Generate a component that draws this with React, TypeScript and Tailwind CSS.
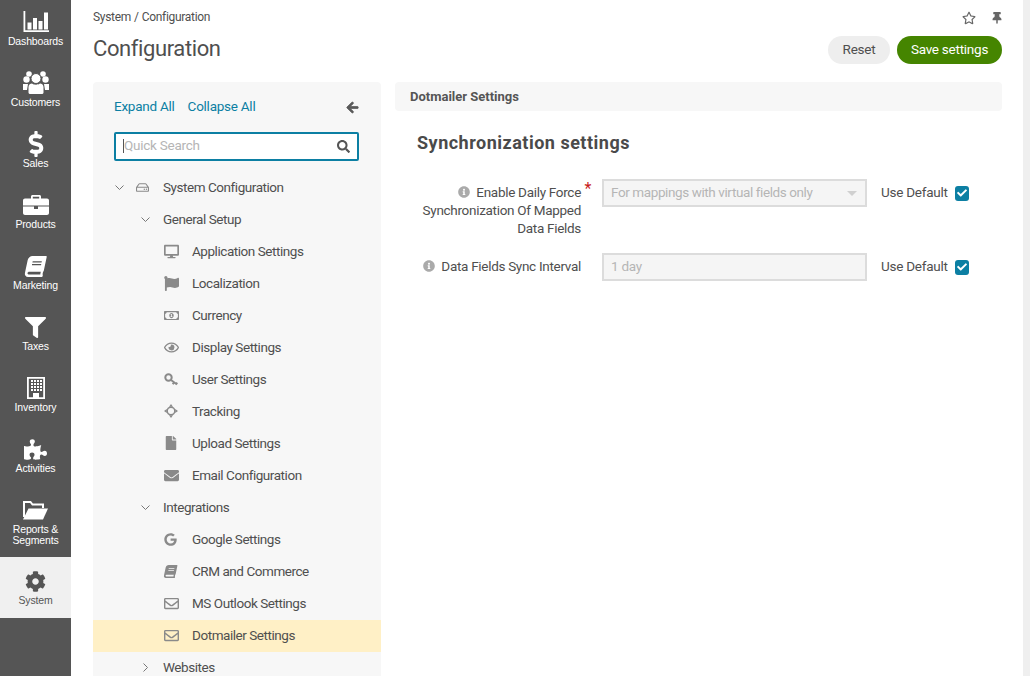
import type { ReactNode } from 'react';
import {
  FaArrowLeft, FaBook, FaCheck, FaCog, FaDesktop, FaDollarSign, FaEnvelope, FaFile, FaFilter, FaFlag, FaGoogle,
  FaInfoCircle, FaPuzzlePiece, FaRegEnvelope, FaRegEye, FaRegHdd, FaRegMoneyBillAlt, FaRegStar, FaSearch, FaThumbtack,
} from 'react-icons/fa';

function BarChartIcon() {
  return (
    <svg width="26" height="22" viewBox="0 0 26 22" fill="currentColor">
      <path d="M0.5 0h1.8v19.2H26V21H0.5z" />
      <rect x="4.5" y="11.5" width="4" height="7" />
      <rect x="10" y="7" width="4" height="11.5" />
      <rect x="15.5" y="10" width="4" height="8.5" />
      <rect x="21" y="1.5" width="4" height="17" />
    </svg>
  );
}

function UsersIcon() {
  return (
    <svg width="26" height="24" viewBox="0 0 26 24" fill="currentColor">
      <circle cx="6" cy="3" r="2.8" />
      <circle cx="20" cy="3" r="2.8" />
      <circle cx="3.5" cy="8.5" r="3.2" />
      <circle cx="22.5" cy="8.5" r="3.2" />
      <path d="M0 13h5l-1 6H0zM26 13h-5l1 6h4z" />
      <circle cx="13" cy="7.5" r="5" stroke="#555555" strokeWidth="1" />
      <path d="M5.5 16c0-2.5 2-3.500 3.500-3.500 1 .8 2.500 1.200 4 1.200s3-.4 4-1.200c1.500 0 3.500 1 3.500 3.500v5.500c0 1-1 1.500-2 1.500H7.500c-1 0-2-.5-2-1.500z" />
    </svg>
  );
}

function BriefcaseIcon() {
  return (
    <svg width="26" height="20" viewBox="0 0 26 20" fill="currentColor">
      <path d="M8 4V1.500C8 .7 8.700 0 9.500 0h7C17.300 0 18 .7 18 1.500V4h-1.800V1.800H9.800V4z" />
      <path d="M2 3.500h22c1.100 0 2 .9 2 2v5H0v-5c0-1.100.9-2 2-2zM0 11.500h11V14h4v-2.500h11V18c0 1.100-.9 2-2 2H2c-1.100 0-2-.9-2-2z" />
    </svg>
  );
}

function BuildingIcon() {
  const cols = [4, 7, 10, 13];
  const rows = [3, 6, 9, 12];
  return (
    <svg width="18" height="22" viewBox="0 0 18 22" fill="currentColor">
      <path fillRule="evenodd" d="M0 0h18v22H0zM1.800 1.800v18.400h4.200V16h6v4.200h4.200V1.800z" />
      {rows.map((y) => cols.map((x) => <rect key={`${x}-${y}`} x={x} y={y} width="2" height="2" />))}
    </svg>
  );
}

function FolderIcon() {
  return (
    <svg width="25" height="20" viewBox="0 0 25 20" fill="currentColor">
      <path d="M1 17V2h6.500l2 2.500H20V8" fill="none" stroke="currentColor" strokeWidth="2" />
      <path d="M5.500 8.500H25L20 19.500H0z" />
    </svg>
  );
}

function KeyIcon() {
  return (
    <svg width="14" height="13" viewBox="0 0 14 13" fill="none" stroke="currentColor" strokeWidth="2">
      <circle cx="4.500" cy="4.500" r="3.200" />
      <path d="M7 7l6 4.500M10 9.200l-1.200 2M12.300 10.900l1-1.300" />
    </svg>
  );
}

function TrackIcon() {
  return (
    <svg width="14" height="14" viewBox="0 0 14 14" fill="currentColor">
      <circle cx="7" cy="7" r="3.800" fill="none" stroke="currentColor" strokeWidth="1.500" />
      <path d="M7 0l2 2.800H5zM7 14l2-2.800H5zM0 7l2.800-2v4zM14 7l-2.800-2v4z" />
    </svg>
  );
}

function Chevron({ open }: { open: boolean }) {
  return (
    <svg width="9" height="9" viewBox="0 0 9 9" fill="none" stroke="#777" strokeWidth="1" className={open ? '' : '-rotate-90'}>
      <path d="M0.5 2.500 4.500 6.500 8.500 2.500" />
    </svg>
  );
}

const NAV: { label: ReactNode; icon: ReactNode; h: string }[] = [
  { label: 'Dashboards', icon: <BarChartIcon />, h: 'h-[61px]' },
  { label: 'Customers', icon: <UsersIcon />, h: 'h-[61px]' },
  { label: 'Sales', icon: <FaDollarSign size={26} />, h: 'h-[61px]' },
  { label: 'Products', icon: <BriefcaseIcon />, h: 'h-[61px]' },
  { label: 'Marketing', icon: <FaBook size={21} className="-skew-x-12" />, h: 'h-[61px]' },
  { label: 'Taxes', icon: <FaFilter size={21} />, h: 'h-[61px]' },
  { label: 'Inventory', icon: <BuildingIcon />, h: 'h-[61px]' },
  { label: 'Activities', icon: <FaPuzzlePiece size={23} />, h: 'h-[61px]' },
  { label: <>Reports &<br />Segments</>, icon: <FolderIcon />, h: 'h-[71px]' },
];

const GENERAL = [
  { label: 'Application Settings', icon: <FaDesktop size={15} /> },
  { label: 'Localization', icon: <FaFlag size={15} /> },
  { label: 'Currency', icon: <FaRegMoneyBillAlt size={15} /> },
  { label: 'Display Settings', icon: <FaRegEye size={15} /> },
  { label: 'User Settings', icon: <KeyIcon /> },
  { label: 'Tracking', icon: <TrackIcon /> },
  { label: 'Upload Settings', icon: <FaFile size={14} /> },
  { label: 'Email Configuration', icon: <FaEnvelope size={15} /> },
];

const INTEGRATIONS = [
  { label: 'Google Settings', icon: <FaGoogle size={13} /> },
  { label: 'CRM and Commerce', icon: <FaBook size={13} className="-skew-x-12" /> },
  { label: 'MS Outlook Settings', icon: <FaRegEnvelope size={15} /> },
];

function Leaf({ label, icon, active }: { label: string; icon: ReactNode; active?: boolean }) {
  return (
    <li className={`flex h-8 items-center pb-[2px] pl-[71px] ${active ? 'bg-[#fff0c6]' : ''}`}>
      <span className="flex w-[28px] shrink-0 items-center text-[#8a8a8a]">{icon}</span>
      {label}
    </li>
  );
}

function Branch({ label, open }: { label: string; open: boolean }) {
  return (
    <li className="flex h-8 items-center pb-[2px] pl-[48px]">
      <span className="flex w-[22px] shrink-0 items-center"><Chevron open={open} /></span>
      {label}
    </li>
  );
}

function Field({ label, required, children }: { label: ReactNode; required?: boolean; children: ReactNode }) {
  return (
    <div className="flex items-start">
      <div className="relative w-[164px] pt-[4px] text-right leading-[18px] tracking-[-0.3px]">
        {label}
        {required && <span className="absolute -right-[10px] top-[1px] text-[16px] text-[#c81c1c]">*</span>}
      </div>
      <div className="ml-[21px] w-[265px]">{children}</div>
      <div className="ml-[14px] flex h-7 items-center">
        <span className="pb-[1px]">Use Default</span>
        <span className="ml-[7px] flex h-[15px] w-[14px] items-center justify-center rounded-[3px] bg-[#0c7fa3] text-white">
          <FaCheck size={10} />
        </span>
      </div>
    </div>
  );
}

export default function App() {
  return (
    <div className="flex h-[676px] w-[1030px] overflow-hidden bg-white font-['Roboto',sans-serif] text-[13.5px] tracking-[-0.25px] text-[#4f4f4f]">
      {/* Sidebar */}
      <nav className="flex w-[71px] shrink-0 flex-col bg-[#555555] font-['Liberation_Sans',sans-serif] text-[10.5px] leading-[11px] tracking-[-0.15px]">
        <div className="-mt-[2px]">
          {NAV.map((n, i) => (
            <div key={i} className={`flex ${n.h} flex-col items-center pt-[12px] text-center text-white`}>
              <span className="flex h-[24px] items-center">{n.icon}</span>
              <span className="mt-[2px]">{n.label}</span>
            </div>
          ))}
        </div>
        <div className="flex h-[61px] flex-col items-center bg-[#f0f0f0] pt-[12px] text-[#555555]">
          <span className="flex h-[24px] items-center"><FaCog size={21} /></span>
          <span className="mt-[2px]">System</span>
        </div>
      </nav>

      {/* Page */}
      <main className="flex min-w-0 flex-1 flex-col pl-[22px] pr-[21px]">
        <div className="flex items-start justify-between pt-[11px]">
          <div>
            <div className="text-[12px] leading-[12px] tracking-[-0.3px]">System<span className="mx-[3px]">/</span>Configuration</div>
            <h1 className="mt-[12px] text-[22px] font-normal leading-[28px] tracking-[-0.4px]">Configuration</h1>
          </div>
          <div className="flex flex-col items-end">
            <div className="flex items-center gap-[15px] text-[#666]">
              <FaRegStar size={14} />
              <span className="mr-[-1px]"><FaThumbtack size={12} /></span>
            </div>
            <div className="mt-[11px] flex gap-[7px]">
              <button className="h-7 w-[62px] rounded-full bg-[#eeeeee] pb-[2px]">Reset</button>
              <button className="h-7 w-[105px] rounded-full bg-[#458500] pb-[2px] text-white">Save settings</button>
            </div>
          </div>
        </div>

        <div className="mt-[18px] flex min-h-0 flex-1 gap-[14px]">
          {/* Tree */}
          <aside className="w-[288px] shrink-0 rounded-t-[4px] bg-[#f7f7f7]">
            <div className="flex items-center justify-between pl-[21px] pr-[22px] pt-[15px]">
              <div className="flex gap-[13px] leading-[18px] text-[#0c7fa3]">
                <span>Expand All</span>
                <span>Collapse All</span>
              </div>
              <FaArrowLeft size={13} stroke="currentColor" strokeWidth={30} className="mt-[2px] text-[#5a5a5a]" />
            </div>
            <div className="ml-[21px] mr-[22px] mt-[17px] flex h-[29px] items-center justify-between rounded-[2px] border-2 border-[#0c7fa3] bg-white pl-[7px] pr-[7px]">
              <span className="flex items-center pb-[2px] text-[#b5b5b5]">
                <span className="h-[14px] w-px bg-[#555]" />Quick Search
              </span>
              <FaSearch size={13} className="text-[#555]" />
            </div>
            <ul className="mt-[11px] tracking-[-0.45px]">
              <li className="flex h-8 items-center pb-[2px] pl-[22px]">
                <span className="flex w-[21px] shrink-0 items-center"><Chevron open /></span>
                <span className="flex w-[27px] shrink-0 items-center text-[#8a8a8a]"><FaRegHdd size={13} /></span>
                System Configuration
              </li>
              <Branch label="General Setup" open />
              {GENERAL.map((g) => <Leaf key={g.label} {...g} />)}
              <Branch label="Integrations" open />
              {INTEGRATIONS.map((g) => <Leaf key={g.label} {...g} />)}
              <Leaf label="Dotmailer Settings" icon={<FaRegEnvelope size={15} />} active />
              <Branch label="Websites" open={false} />
            </ul>
          </aside>

          {/* Form */}
          <section className="min-w-0 flex-1">
            <div className="flex h-[29px] items-center rounded-[4px] bg-[#f7f7f7] pl-[15px] text-[13px] font-bold tracking-normal text-[#555]">Dotmailer Settings</div>
            <h2 className="ml-[22px] mt-[20px] text-[18px] font-bold leading-[24px] tracking-[0.5px] text-[#4a4a4a]">Synchronization settings</h2>
            <div className="ml-[22px] mt-[24px] flex flex-col gap-[16px]">
              <Field required label={<><FaInfoCircle size={12} className="mr-[6px] inline align-[-1px] text-[#aaa]" />Enable Daily Force Synchronization Of Mapped Data Fields</>}>
                <div className="flex h-7 items-center justify-between border-2 border-[#dcdcdc] bg-[#f5f5f5] pb-[2px] pl-[7px] pr-[8px] tracking-[-0.4px] text-[#b5b5b5]">
                  For mappings with virtual fields only
                  <span className="mt-[2px] h-0 w-0 border-x-[5px] border-t-[5px] border-x-transparent border-t-[#d0d0d0]" />
                </div>
              </Field>
              <Field label={<span className="whitespace-nowrap"><FaInfoCircle size={12} className="mr-[6px] inline align-[-1px] text-[#aaa]" />Data Fields Sync Interval</span>}>
                <div className="flex h-7 items-center border-2 border-[#dcdcdc] bg-[#f5f5f5] pb-[2px] pl-[7px] text-[#b5b5b5]">1 day</div>
              </Field>
            </div>
          </section>
        </div>
      </main>

      {/* Scrollbar gutter */}
      <div className="w-[7px] shrink-0 bg-[#efefef]" />
    </div>
  );
}
